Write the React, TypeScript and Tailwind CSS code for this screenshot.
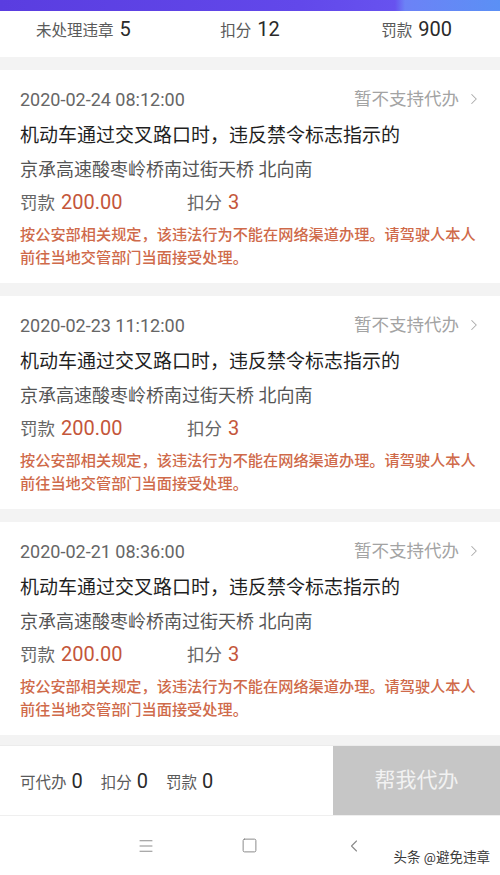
import { ChevronRight, Menu, Square, ChevronLeft } from "lucide-react";

const RECORDS = [
  { time: "2020-02-24 08:12:00" },
  { time: "2020-02-23 11:12:00" },
  { time: "2020-02-21 08:36:00" },
];

const FONT = "font-['Roboto','Noto_Sans_CJK_SC',sans-serif]";

function Stat({ label, value }: { label: string; value: string }) {
  return (
    <div className="flex items-baseline justify-center gap-[6px]">
      <span className="text-[15.5px] text-[#5a5a5a]">{label}</span>
      <span className="text-[20px] text-[#2a2a2a]">{value}</span>
    </div>
  );
}

function RecordCard({ time }: { time: string }) {
  return (
    <div className="bg-white px-5 pt-[16px] pb-[13px]">
      <div className="flex h-[26px] items-center justify-between">
        <span className="text-[18px] text-[#666]">{time}</span>
        <span className="flex items-center text-[17.5px] text-[#a3a3a3]">
          暂不支持代办
          <ChevronRight size={18} strokeWidth={1.4} className="ml-[6px] -mr-[3px] text-[#aaa]" />
        </span>
      </div>
      <div className="mt-[12px] text-[19px] leading-[24px] text-[#1f1f1f]">
        机动车通过交叉路口时，违反禁令标志指示的
      </div>
      <div className="mt-[10px] text-[18px] leading-[24px] text-[#555]">
        京承高速酸枣岭桥南过街天桥 北向南
      </div>
      <div className="mt-[8px] flex h-[24px] items-center">
        <div className="flex w-[167px] items-baseline gap-[6px]">
          <span className="text-[17.5px] text-[#666]">罚款</span>
          <span className="text-[20px] text-[#c4563a]">200.00</span>
        </div>
        <div className="flex items-baseline gap-[6px]">
          <span className="text-[17.5px] text-[#666]">扣分</span>
          <span className="text-[20px] text-[#c4563a]">3</span>
        </div>
      </div>
      <p className="mt-[10px] -mr-[4px] text-[15.2px] font-medium leading-[23px] text-[#cf6a4a]">
        按公安部相关规定，该违法行为不能在网络渠道办理。请驾驶人本人前往当地交管部门当面接受处理。
      </p>
    </div>
  );
}

export default function App() {
  return (
    <div className={`${FONT} flex h-[875px] w-[500px] flex-col overflow-hidden bg-[#f3f3f3]`}>
      {/* header strip */}
      <div className="h-[11px] bg-[linear-gradient(to_right,#5a3de0_0%,#6248ea_60%,#6752ef_79%,#6c82f6_81%,#5b90f5_100%)]" />

      {/* summary */}
      <div className="grid h-[46px] grid-cols-3 items-center bg-white pb-[10px]">
        <Stat label="未处理违章" value="5" />
        <Stat label="扣分" value="12" />
        <Stat label="罚款" value="900" />
      </div>

      {/* records */}
      <div className="mt-[13px] flex flex-col gap-[13px]">
        {RECORDS.map((r) => (
          <RecordCard key={r.time} time={r.time} />
        ))}
      </div>

      <div className="flex-1" />

      {/* action bar */}
      <div className="flex h-[70px] items-stretch border-t border-[#ececec] bg-white">
        <div className="flex flex-1 items-center gap-[18px] pl-5">
          {[
            ["可代办", "0"],
            ["扣分", "0"],
            ["罚款", "0"],
          ].map(([l, v]) => (
            <div key={l} className="flex items-baseline gap-[5px]">
              <span className="text-[15.5px] text-[#5a5a5a]">{l}</span>
              <span className="text-[20px] text-[#2a2a2a]">{v}</span>
            </div>
          ))}
        </div>
        <div className="flex w-[167px] items-center justify-center bg-[#c6c6c6] text-[21px] text-[#f2f2f2]">
          帮我代办
        </div>
      </div>

      {/* system nav */}
      <div className="relative flex h-[60px] items-center justify-center gap-[86px] border-t border-[#efefef] bg-white text-[#8a8a8a]">
        <Menu size={18} strokeWidth={1.3} />
        <Square size={17} strokeWidth={1.4} className="rounded" />
        <ChevronLeft size={20} strokeWidth={1.3} />
        <span className="absolute right-[10px] bottom-[8px] text-[13.5px] text-[#3a3a3a]">头条 @避免违章</span>
      </div>
    </div>
  );
}
